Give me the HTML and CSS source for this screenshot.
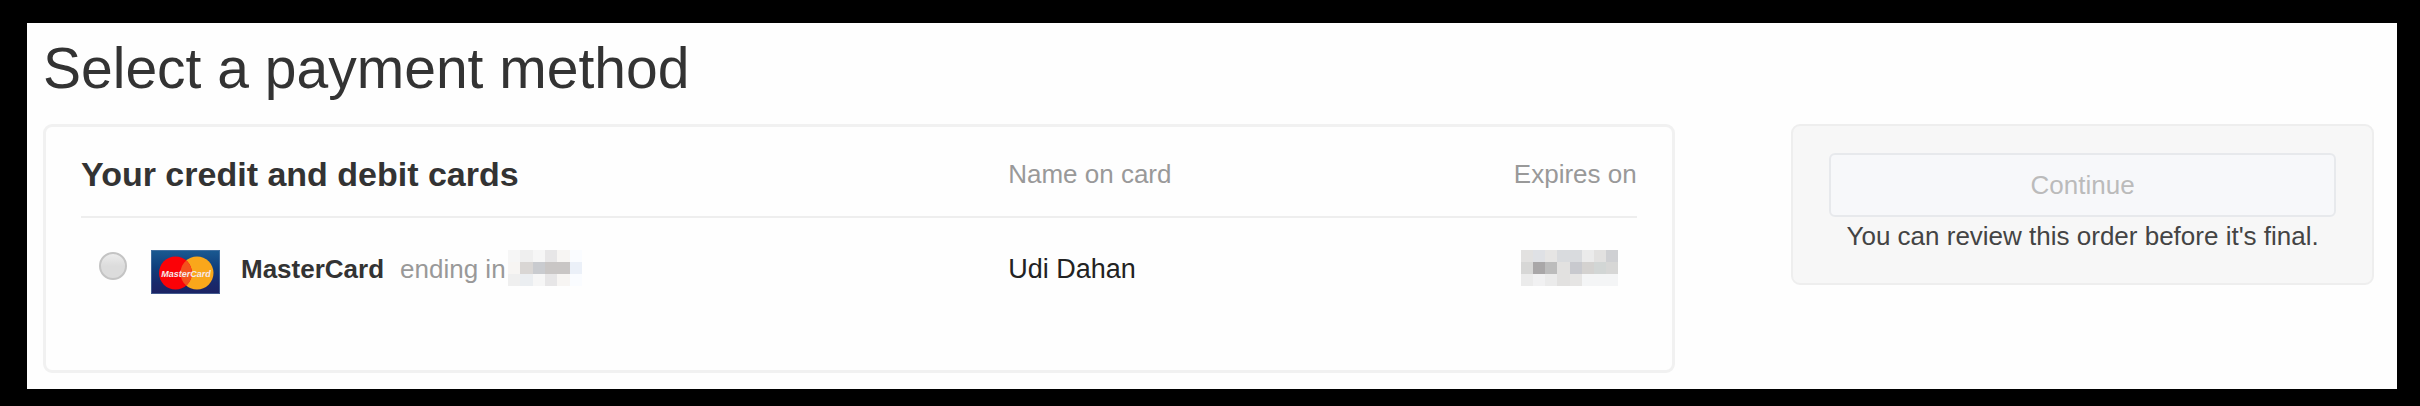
FILE: index.html
```html
<!DOCTYPE html>
<html lang="en">
<head>
<meta charset="utf-8">
<title>Select a payment method</title>
<link rel="stylesheet" href="styles.css">
</head>
<body>
<main class="page">
  <h1 class="title">Select a payment method</h1>
  <form class="columns">
    <section class="cards">
      <table class="card-table">
        <colgroup><col class="col-card"><col class="col-name"><col></colgroup>
        <thead>
          <tr>
            <th class="cards-heading" scope="col">Your credit and debit cards</th>
            <th scope="col">Name on card</th>
            <th class="expires-heading" scope="col">Expires on</th>
          </tr>
        </thead>
        <tbody>
          <tr>
            <td>
              <label class="option">
                <input class="radio" type="radio" name="card">
                <svg class="logo" viewBox="0 0 69 44" aria-hidden="true">
                  <defs>
                    <linearGradient id="blue" x1="0" y1="0" x2="0" y2="1">
                      <stop offset="0" stop-color="#1a5a92"/>
                      <stop offset="0.4" stop-color="#103f7c"/>
                      <stop offset="0.75" stop-color="#19296b"/>
                      <stop offset="1" stop-color="#1c2263"/>
                    </linearGradient>
                  </defs>
                  <rect width="69" height="44" fill="url(#blue)"/>
                  <rect x="0.5" y="0.5" width="68" height="43" fill="none" stroke="#5b7fab" stroke-opacity="0.6"/>
                  <circle cx="46" cy="23" r="16.500" fill="#f9a71b"/>
                  <circle cx="24.500" cy="23" r="16.500" fill="#fb0207"/>
                  <path d="M35.200 10.500a16.500 16.500 0 0 1 0 25a16.500 16.500 0 0 1 0-25z" fill="#f4511c"/>
                  <text class="logo-text" x="35" y="27" text-anchor="middle">MasterCard</text>
                </svg>
                <span class="card-label"><strong class="brand">MasterCard</strong><span class="ending">ending in</span></span>
                <svg class="mask mask-digits" viewBox="0 0 6 3" preserveAspectRatio="none" shape-rendering="crispEdges" aria-hidden="true">
                  <path fill="#f6f6f6" d="M0 0h1v1H0zM2 0h1v1H2zM2 2h1v1H2z"/>
                  <path fill="#efefef" d="M1 0h1v1H1zM0 2h1v1H0z"/>
                  <path fill="#e7e6e7" d="M3 0h1v1H3zM3 2h1v1H3z"/>
                  <path fill="#f7f5f3" d="M4 0h1v1H4zM0 1h1v1H0zM4 2h1v1H4z"/>
                  <path fill="#fafcff" d="M5 0h1v1H5zM5 2h1v1H5z"/>
                  <path fill="#d9d6d4" d="M1 1h1v1H1z"/>
                  <path fill="#c9cbcf" d="M2 1h1v1H2z"/>
                  <path fill="#c9c6c5" d="M3 1h2v1H3z"/>
                  <path fill="#ebf0f8" d="M5 1h1v1H5z"/>
                  <path fill="#ebeef1" d="M1 2h1v1H1z"/>
                </svg>
              </label>
            </td>
            <td class="holder">Udi Dahan</td>
            <td class="expires">
              <svg class="mask mask-date" viewBox="0 0 8 3" preserveAspectRatio="none" shape-rendering="crispEdges" aria-hidden="true">
                <path fill="#e2e1e0" d="M0 0h1v1H0zM6 0h1v1H6zM3 1h1v2H3z"/>
                <path fill="#dfe1e5" d="M1 0h1v1H1z"/>
                <path fill="#e6e5e4" d="M2 0h1v1H2zM4 2h1v1H4z"/>
                <path fill="#d9dbde" d="M3 0h1v1H3zM4 0h1v1H4z"/>
                <path fill="#ebebeb" d="M5 0h1v1H5zM0 2h1v1H0zM2 2h1v1H2z"/>
                <path fill="#cfd0d3" d="M7 0h1v1H7z"/>
                <path fill="#d7d7d6" d="M0 1h1v1H0zM7 1h1v1H7z"/>
                <path fill="#a9a7a8" d="M1 1h1v1H1z"/>
                <path fill="#bcbcbc" d="M2 1h1v1H2z"/>
                <path fill="#c8c9ce" d="M4 1h1v1H4z"/>
                <path fill="#d4d2d0" d="M5 1h1v1H5z"/>
                <path fill="#d2d6d5" d="M6 1h1v1H6z"/>
                <path fill="#f1f1f2" d="M1 2h1v1H1z"/>
                <path fill="#f4f5f6" d="M5 2h3v1H5z"/>
              </svg>
            </td>
          </tr>
        </tbody>
      </table>
    </section>
    <aside class="summary">
      <button class="continue" type="submit" disabled>Continue</button>
      <p class="note">You can review this order before it's final.</p>
    </aside>
  </form>
</main>
</body>
</html>
```
FILE: styles.css
```css
* {
  box-sizing: border-box;
}

body {
  margin: 0;
  padding: 23px 23px 18px 27px;
  background: #000;
  color: #333;
  font: 26px/38px "Liberation Sans", Arial, sans-serif;
}

.page {
  padding: 13px 23px 16px 16px;
  background: #fefefe;
}

.title {
  margin: 0 0 24px;
  font-size: 57px;
  font-weight: 400;
  line-height: 64px;
}

.columns {
  display: grid;
  grid-template-columns: 70% 25%;
  justify-content: space-between;
  align-items: start;
}

.cards {
  padding: 5px 35px 44px;
  border: 3px solid #f1f1f1;
  border-radius: 9px;
}

.card-table {
  width: 100%;
  table-layout: fixed;
  border-collapse: separate;
  border-spacing: 0;
}

.col-card {
  width: 59.6%;
}

.col-name {
  width: 20%;
}

.card-table th {
  height: 86px;
  padding: 0;
  border-bottom: 2px solid #eee;
  color: #999;
  font-weight: 400;
  text-align: left;
  vertical-align: middle;
}

.card-table .cards-heading {
  color: #333;
  font-size: 34px;
  font-weight: 700;
}

.card-table .expires-heading {
  text-align: right;
}

.card-table td {
  padding: 32px 0;
  vertical-align: top;
}

.option {
  display: flex;
  align-items: flex-start;
  padding-left: 18px;
}

.radio {
  appearance: none;
  width: 28px;
  height: 28px;
  margin: 2px 24px 0 0;
  border: 2px solid #c4c4c4;
  border-radius: 50%;
  background: linear-gradient(#ececec, #dcdcdc 50%);
}

.radio:checked {
  background: radial-gradient(#555 35%, #dcdcdc 40%);
}

.logo {
  width: 69px;
  height: 44px;
  margin-right: 21px;
}

.logo-text {
  fill: #f6e9ea;
  font: italic 700 9px "Liberation Sans", Arial, sans-serif;
}

.card-label {
  display: flex;
  gap: 16px;
  white-space: nowrap;
}

.ending {
  color: #999;
}

.mask {
  display: block;
  height: 36px;
}

.mask-digits {
  width: 74px;
  margin-left: 2px;
}

.mask-date {
  width: 97px;
  margin-left: auto;
}

.card-table .holder {
  color: #222;
  font-size: 27px;
}

.card-table .expires {
  padding-right: 19px;
}

.summary {
  padding: 27px 36px 28px;
  border: 2px solid #eee;
  border-radius: 9px;
  background: #f7f7f7;
  text-align: center;
}

.continue {
  display: block;
  width: 100%;
  height: 64px;
  padding: 0;
  border: 2px solid #e7e9ec;
  border-radius: 6px;
  background: #f7f8fa;
  color: #bbb;
  font: inherit;
}

.note {
  margin: 0;
  color: #444;
}
```
